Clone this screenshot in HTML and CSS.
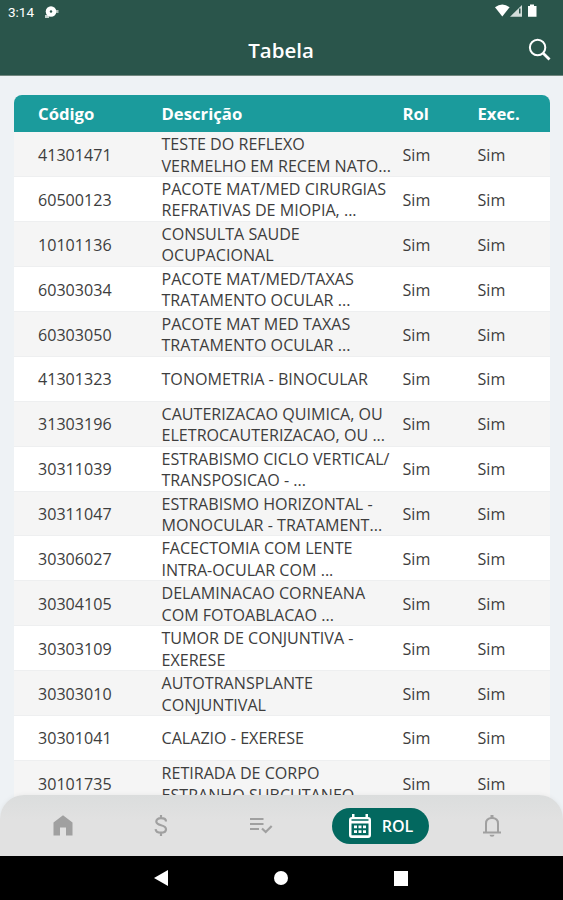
FILE: index.html
```html
<!DOCTYPE html>
<html lang="pt-BR">
<head>
  <meta charset="UTF-8" />
  <title>Tabela</title>
  <link rel="stylesheet" href="styles.css">
</head>
<body>
  <div class="screen">
    <!-- Header -->
    <header class="header">
      <div class="status-bar">
        <span class="time">3:14</span>
        <svg class="notif" width="15" height="13" viewBox="0 0 15 13">
          <path d="M0 9h4v3H0z" fill="#c3d0cc" />
          <path d="M10 4h3.500v3H10z" fill="#a9bcb6" />
          <circle cx="6" cy="5.500" r="5.300" fill="#fff" />
          <circle cx="6" cy="5.500" r="1.200" fill="#2a554b" />
        </svg>
        <svg class="signals" width="44" height="14" viewBox="0 0 44 14">
          <path d="M0 3.200Q7.300 -2 14.600 3.200L7.300 12.500Z" fill="#fff" />
          <path d="M15 12.700 27 1V12.700Z" fill="#d3ddda" />
          <path d="M24 4.500h1.500v5H24z" fill="#2a554b" />
          <path d="M35 .5h4V2h2.500v10.700h-8.500V2H35z" fill="#fff" />
        </svg>
      </div>
      <div class="title-bar">
        <h1>Tabela</h1>
        <svg class="search" width="24" height="24" viewBox="0 0 24 24" fill="none" stroke="#fff">
          <circle cx="9.600" cy="9.500" r="7.700" stroke-width="2" />
          <path d="m15.200 15.200 6.300 6.300" stroke-width="2.800" />
        </svg>
      </div>
    </header>

    <!-- Table -->
    <main class="content">
      <div class="table">
        <div class="row head"><span>Código</span><span>Descrição</span><span>Rol</span><span>Exec.</span></div>
        <div class="row"><span>41301471</span><span>TESTE DO REFLEXO<br>VERMELHO EM RECEM NATO...</span><span>Sim</span><span>Sim</span></div>
        <div class="row"><span>60500123</span><span>PACOTE MAT/MED CIRURGIAS<br>REFRATIVAS DE MIOPIA, ...</span><span>Sim</span><span>Sim</span></div>
        <div class="row"><span>10101136</span><span>CONSULTA SAUDE<br>OCUPACIONAL</span><span>Sim</span><span>Sim</span></div>
        <div class="row"><span>60303034</span><span>PACOTE MAT/MED/TAXAS<br>TRATAMENTO OCULAR ...</span><span>Sim</span><span>Sim</span></div>
        <div class="row"><span>60303050</span><span>PACOTE MAT MED TAXAS<br>TRATAMENTO OCULAR ...</span><span>Sim</span><span>Sim</span></div>
        <div class="row"><span>41301323</span><span>TONOMETRIA - BINOCULAR</span><span>Sim</span><span>Sim</span></div>
        <div class="row"><span>31303196</span><span>CAUTERIZACAO QUIMICA, OU<br>ELETROCAUTERIZACAO, OU ...</span><span>Sim</span><span>Sim</span></div>
        <div class="row"><span>30311039</span><span>ESTRABISMO CICLO VERTICAL/<br>TRANSPOSICAO - ...</span><span>Sim</span><span>Sim</span></div>
        <div class="row"><span>30311047</span><span>ESTRABISMO HORIZONTAL -<br>MONOCULAR - TRATAMENT...</span><span>Sim</span><span>Sim</span></div>
        <div class="row"><span>30306027</span><span>FACECTOMIA COM LENTE<br>INTRA-OCULAR COM ...</span><span>Sim</span><span>Sim</span></div>
        <div class="row"><span>30304105</span><span>DELAMINACAO CORNEANA<br>COM FOTOABLACAO ...</span><span>Sim</span><span>Sim</span></div>
        <div class="row"><span>30303109</span><span>TUMOR DE CONJUNTIVA -<br>EXERESE</span><span>Sim</span><span>Sim</span></div>
        <div class="row"><span>30303010</span><span>AUTOTRANSPLANTE<br>CONJUNTIVAL</span><span>Sim</span><span>Sim</span></div>
        <div class="row"><span>30301041</span><span>CALAZIO - EXERESE</span><span>Sim</span><span>Sim</span></div>
        <div class="row"><span>30101735</span><span>RETIRADA DE CORPO<br>ESTRANHO SUBCUTANEO</span><span>Sim</span><span>Sim</span></div>
      </div>
    </main>

    <!-- Tab bar -->
    <nav class="tabs">
      <div class="tab">
        <svg width="20" height="21" viewBox="0 0 20 21">
          <path d="M.5 7.500 10 .3l9.500 7.200V20.500H13v-8H7v8H.5z" fill="#a0a0a0" />
        </svg>
      </div>
      <div class="tab">
        <svg width="14" height="21" viewBox="0 0 14 21" fill="none" stroke="#a0a0a0" stroke-width="2.200">
          <path d="M12 6.500C12 4.300 10 3.200 7 3.200S2.300 4.600 2.300 6.500C2.300 11.500 12 9 12 14.200c0 2.200-2.200 3.500-5 3.500s-5.200-1.200-5.400-3.600M7 0v3.200M7 17.700V21" />
        </svg>
      </div>
      <div class="tab">
        <svg width="24" height="17" viewBox="0 0 24 17" fill="none" stroke="#a0a0a0" stroke-width="2.200">
          <path d="M1 2h13.500M1 7h13.500M1 12h9M13 11.500l3.700 3.500 6-6" />
        </svg>
      </div>
      <div class="tab tab-active">
        <svg width="24" height="26" viewBox="0 0 24 26">
          <path d="M4 1h2.500v3h11V1H20v3a3 3 0 0 1 3 3v15a3 3 0 0 1-3 3H4a3 3 0 0 1-3-3V7a3 3 0 0 1 3-3z" fill="#fff" />
          <path d="M3.500 6.200h17v1.600h-17zM3.500 10.500h17v11.700h-17z" fill="#03685f" />
          <path d="M6 12.500h3v2.700H6zm4.500 0h3v2.700h-3zm4.500 0h3v2.700h-3zM6 17.300h3V20H6zm4.500 0h3V20h-3zm4.500 0h3V20h-3z" fill="#fff" />
        </svg>
        <span>ROL</span>
      </div>
      <div class="tab">
        <svg width="20" height="24" viewBox="0 0 20 24">
          <path d="M4 18V9.500C4 6 6.500 4 10 4s6 2 6 5.500V18M1 18.500h18" fill="none" stroke="#a0a0a0" stroke-width="2" />
          <path d="M8.500 1h3v3h-3zM7.500 20.800h5a2.500 2 0 0 1-5 0z" fill="#a0a0a0" />
        </svg>
      </div>
    </nav>

    <!-- Android buttons -->
    <div class="system-nav">
      <svg width="14" height="16" viewBox="0 0 14 16"><path d="M0 8 14 0v16z" fill="#fff" /></svg>
      <svg width="14" height="14" viewBox="0 0 14 14"><circle cx="7" cy="7" r="7" fill="#fff" /></svg>
      <svg width="14" height="15" viewBox="0 0 14 15"><path d="M0 0h14v15H0z" fill="#fff" /></svg>
    </div>
  </div>
</body>
</html>
```
FILE: styles.css
```css
body {
  margin: 0;
  font-family: "Open Sans", sans-serif;
  font-size: 16.1px;
  color: #3d3d3d;
}
svg {
  display: block;
  flex: none;
}
.screen {
  display: flex;
  flex-direction: column;
  height: 900px;
  overflow: hidden;
  background: #eef2f5;
}
.header {
  flex: none;
  height: 75px;
  background: #2a554b;
  border-bottom: 1px solid #71877f;
  color: #fff;
}
.status-bar {
  display: flex;
  height: 25px;
  padding: 0 24px 0 8px;
}
.time {
  width: 37px;
  padding-top: 3px;
  font: 400 13.5px/18px Roboto, sans-serif;
}
.notif {
  margin-top: 6px;
}
.signals {
  margin: 4px 0 0 auto;
}
.title-bar {
  display: grid;
  grid-template-columns: 1fr auto 1fr;
  align-items: center;
  height: 50px;
  padding: 0 11px 0 10px;
}
h1 {
  grid-column: 2;
  margin: 0;
  font-size: 20.5px;
  font-weight: 600;
  line-height: 48px;
}
.search {
  justify-self: end;
}
.content {
  flex: 1;
  min-height: 0;
  overflow: hidden;
  padding: 19px 13px 0 14px;
}
.table {
  border-radius: 8px 8px 0 0;
  overflow: hidden;
}
.row {
  display: grid;
  grid-template-columns: 123.5px 241px 75px 1fr;
  align-items: center;
  height: 44.95px;
  padding: 2px 0 0 24px;
  box-sizing: border-box;
  border-bottom: 1px solid #eeeff0;
  line-height: 21.5px;
  white-space: nowrap;
  background: #fff;
}
.row:nth-child(even) {
  background: #f5f5f5;
}
.row.head {
  height: 37px;
  padding-top: 0;
  border: 0;
  background: #1b9b9c;
  color: #fff;
  font-size: 16.7px;
  font-weight: 700;
}
.tabs {
  display: grid;
  grid-template-columns: 98px 98px 122px 97px 1fr;
  flex: none;
  position: relative;
  align-items: center;
  height: 61px;
  margin-top: -24px;
  padding: 0 8px 0 14px;
  box-sizing: border-box;
  border-radius: 24px 24px 0 0;
  background: linear-gradient(#dbdddd, #e1e1e1 40%);
  box-shadow: 0 0 5px rgba(0, 0, 0, 0.06);
}
.tab {
  display: flex;
  align-items: center;
  justify-content: center;
}
.tab:nth-child(3) {
  margin-right: 20px;
}
.tab-active {
  gap: 10px;
  height: 36px;
  border-radius: 18px;
  background: #03685f;
  color: #fff;
  font-weight: 600;
}
.system-nav {
  display: flex;
  flex: none;
  align-items: center;
  justify-content: space-between;
  height: 44px;
  padding: 0 155px 0 154px;
  box-sizing: border-box;
  background: #000;
}
```
